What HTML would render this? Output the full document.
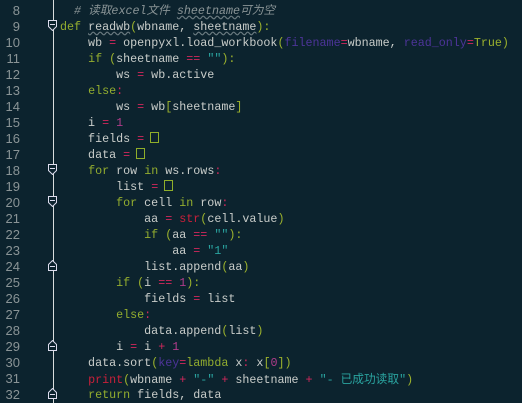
<!DOCTYPE html>
<html><head><meta charset="utf-8"><style>
body{margin:0;width:522px;height:403px;background:#0c232e;overflow:hidden;position:relative;font-family:"Liberation Mono","Noto Sans CJK SC",monospace;font-size:11.7px;color:#c9cdca}
.n{position:absolute;left:0;width:20px;text-align:right;color:#8a9496;line-height:16px;font-family:"Liberation Sans",sans-serif;font-size:13px}
.l{position:absolute;left:60px;line-height:16px;white-space:pre}
.g{position:absolute;left:53px;top:0;width:1px;height:403px;background:#d8dcdc}
.m{position:absolute;left:48px;width:9px;height:11px}
.k{color:#93ad2f}.o{color:#d2285c}.p{color:#9cb22d}.s{color:#2aa4a0}.num{color:#b03c8a}.kw{color:#4d3499}.f{color:#c8203a}.c{color:#8a9496;font-style:italic}
.b{display:inline-block;width:9px;height:11px;border:1.5px solid #8fae2a;box-sizing:border-box;vertical-align:-1px;margin-left:-1px}
.u{text-decoration:underline wavy #6a7a80}
.cj{font-family:"Noto Sans CJK SC",sans-serif}
</style></head><body>
<div class="g"></div>
<svg class="m" style="top:20px" viewBox="0 0 9 11"><path d="M0.5 0.5H8.5V6.5L4.5 10.5L0.5 6.5Z" fill="#0c232e" stroke="#dde" /><path d="M2 4.5H7" stroke="#dde"/></svg>
<svg class="m" style="top:164px" viewBox="0 0 9 11"><path d="M0.5 0.5H8.5V6.5L4.5 10.5L0.5 6.5Z" fill="#0c232e" stroke="#dde" /><path d="M2 4.5H7" stroke="#dde"/></svg>
<svg class="m" style="top:196px" viewBox="0 0 9 11"><path d="M0.5 0.5H8.5V6.5L4.5 10.5L0.5 6.5Z" fill="#0c232e" stroke="#dde" /><path d="M2 4.5H7" stroke="#dde"/></svg>
<svg class="m" style="top:260px" viewBox="0 0 9 11"><path d="M0.5 10.5H8.5V4.5L4.5 0.5L0.5 4.5Z" fill="#0c232e" stroke="#dde" /><path d="M2 6.5H7" stroke="#dde"/></svg>
<svg class="m" style="top:340px" viewBox="0 0 9 11"><path d="M0.5 10.5H8.5V4.5L4.5 0.5L0.5 4.5Z" fill="#0c232e" stroke="#dde" /><path d="M2 6.5H7" stroke="#dde"/></svg>
<svg class="m" style="top:388px" viewBox="0 0 9 11"><path d="M0.5 10.5H8.5V4.5L4.5 0.5L0.5 4.5Z" fill="#0c232e" stroke="#dde" /><path d="M2 6.5H7" stroke="#dde"/></svg>

<div class="n" style="top:3px">8</div><div class="l" style="top:3px"><span class="c">  # 读取excel文件 <span class="u">sheetname</span>可为空</span></div>
<div class="n" style="top:19px">9</div><div class="l" style="top:19px"><span class="k">def</span> <span class="u">readwb</span><span class="p">(</span>wbname, <span class="u">sheetname</span><span class="p">):</span></div>
<div class="n" style="top:35px">10</div><div class="l" style="top:35px">    wb <span class="o">=</span> openpyxl.load_workbook<span class="p">(</span><span class="kw">filename</span><span class="o">=</span>wbname, <span class="kw">read_only</span><span class="o">=</span><span class="p">True)</span></div>
<div class="n" style="top:51px">11</div><div class="l" style="top:51px">    <span class="k">if</span> <span class="p">(</span>sheetname <span class="o">==</span> <span class="s">""</span><span class="p">):</span></div>
<div class="n" style="top:67px">12</div><div class="l" style="top:67px">        ws <span class="o">=</span> wb.active</div>
<div class="n" style="top:83px">13</div><div class="l" style="top:83px">    <span class="k">else</span><span class="o">:</span></div>
<div class="n" style="top:99px">14</div><div class="l" style="top:99px">        ws <span class="o">=</span> wb<span class="p">[</span>sheetname<span class="p">]</span></div>
<div class="n" style="top:115px">15</div><div class="l" style="top:115px">    i <span class="o">=</span> <span class="num">1</span></div>
<div class="n" style="top:131px">16</div><div class="l" style="top:131px">    fields <span class="o">=</span> <span class="b"></span></div>
<div class="n" style="top:147px">17</div><div class="l" style="top:147px">    data <span class="o">=</span> <span class="b"></span></div>
<div class="n" style="top:163px">18</div><div class="l" style="top:163px">    <span class="k">for</span> row <span class="k">in</span> ws.rows<span class="o">:</span></div>
<div class="n" style="top:179px">19</div><div class="l" style="top:179px">        list <span class="o">=</span> <span class="b"></span></div>
<div class="n" style="top:195px">20</div><div class="l" style="top:195px">        <span class="k">for</span> cell <span class="k">in</span> row<span class="o">:</span></div>
<div class="n" style="top:211px">21</div><div class="l" style="top:211px">            aa <span class="o">=</span> <span class="f">str</span><span class="p">(</span>cell.value<span class="p">)</span></div>
<div class="n" style="top:227px">22</div><div class="l" style="top:227px">            <span class="k">if</span> <span class="p">(</span>aa <span class="o">==</span> <span class="s">""</span><span class="p">):</span></div>
<div class="n" style="top:243px">23</div><div class="l" style="top:243px">                aa <span class="o">=</span> <span class="s">"1"</span></div>
<div class="n" style="top:259px">24</div><div class="l" style="top:259px">            list.append<span class="p">(</span>aa<span class="p">)</span></div>
<div class="n" style="top:275px">25</div><div class="l" style="top:275px">        <span class="k">if</span> <span class="p">(</span>i <span class="o">==</span> <span class="num">1</span><span class="p">):</span></div>
<div class="n" style="top:291px">26</div><div class="l" style="top:291px">            fields <span class="o">=</span> list</div>
<div class="n" style="top:307px">27</div><div class="l" style="top:307px">        <span class="k">else</span><span class="o">:</span></div>
<div class="n" style="top:323px">28</div><div class="l" style="top:323px">            data.append<span class="p">(</span>list<span class="p">)</span></div>
<div class="n" style="top:339px">29</div><div class="l" style="top:339px">        i <span class="o">=</span> i <span class="o">+</span> <span class="num">1</span></div>
<div class="n" style="top:355px">30</div><div class="l" style="top:355px">    data.sort<span class="p">(</span><span class="kw">key</span><span class="o">=</span><span class="k">lambda</span> x<span class="o">:</span> x<span class="p">[</span><span class="num">0</span><span class="p">])</span></div>
<div class="n" style="top:371px">31</div><div class="l" style="top:371px">    <span class="f">print</span><span class="p">(</span>wbname <span class="o">+</span> <span class="s">"-"</span> <span class="o">+</span> sheetname <span class="o">+</span> <span class="s">"- <span class="cj">已成功读取</span>"</span><span class="p">)</span></div>
<div class="n" style="top:387px">32</div><div class="l" style="top:387px">    <span class="k">return</span> fields, data</div>
</body></html>
